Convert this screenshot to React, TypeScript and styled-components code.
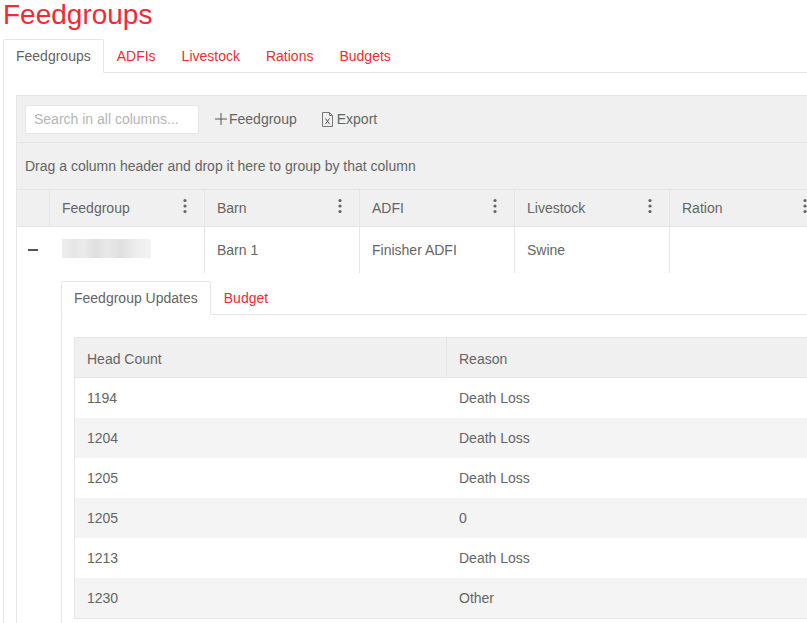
import React from "react";
import styled, { createGlobalStyle } from "styled-components";

const GlobalStyle = createGlobalStyle`
  html, body {
    margin: 0;
    padding: 0;
    height: 100%;
    overflow: hidden;
    background: #fff;
  }
  body {
    font-family: "Liberation Sans", Arial, sans-serif;
    font-size: 14px;
    color: #656565;
  }
`;

const RED = "#f02b36";
const LINE = "#e6e6e6";
const HEAD = "#f0f0f0";

const Page = styled.div`
  width: 1100px;
  padding-left: 3px;
`;

const Title = styled.h1`
  margin: 0;
  height: 39px;
  font-size: 28px;
  line-height: 29px;
  font-weight: 400;
  color: ${RED};
`;

const TabBar = styled.div`
  display: flex;
  align-items: flex-start;
  height: 34px;
  box-sizing: border-box;
  border-bottom: 1px solid ${LINE};
`;

const Tab = styled.div<{ $active?: boolean }>`
  height: ${(p) => (p.$active ? "34px" : "33px")};
  box-sizing: border-box;
  padding: 8px 12px 0;
  line-height: 16px;
  color: ${(p) => (p.$active ? "#656565" : RED)};
  background: ${(p) => (p.$active ? "#fff" : "transparent")};
  border: 1px solid ${(p) => (p.$active ? LINE : "transparent")};
  border-bottom: ${(p) => (p.$active ? "1px solid #fff" : "0")};
  border-radius: 2px 2px 0 0;
`;

const TabBody = styled.div`
  border-left: 1px solid ${LINE};
  padding: 22px 0 0 12px;
`;

const Grid = styled.div`
  border: 1px solid ${LINE};
  border-right: 0;
`;

const Toolbar = styled.div`
  display: flex;
  align-items: center;
  height: 47px;
  box-sizing: border-box;
  padding: 0 8px;
  background: ${HEAD};
  border-bottom: 1px solid ${LINE};
`;

const Search = styled.input`
  width: 174px;
  height: 29px;
  box-sizing: border-box;
  padding: 0 8px;
  border: 1px solid ${LINE};
  border-radius: 2px;
  background: #fff;
  font: inherit;
  &::placeholder {
    color: #b5b5b5;
    opacity: 1;
  }
`;

const ToolButton = styled.div<{ $offset: number; $gap: number }>`
  display: flex;
  align-items: center;
  gap: ${(p) => p.$gap}px;
  margin-left: ${(p) => p.$offset}px;
`;

const GroupHint = styled.div`
  height: 47px;
  box-sizing: border-box;
  padding: 15px 8px 0;
  line-height: 16px;
  background: ${HEAD};
  border-bottom: 1px solid ${LINE};
`;

const Row = styled.div`
  display: grid;
  grid-template-columns: 33px repeat(5, 155px);
`;

const HeadRow = styled(Row)`
  height: 37px;
  background: ${HEAD};
  border-bottom: 1px solid ${LINE};
  box-sizing: border-box;
`;

const HeadCell = styled.div`
  position: relative;
  display: flex;
  align-items: center;
  padding-left: 12px;
  border-right: 1px solid ${LINE};
`;

const MenuDots = styled.svg`
  position: absolute;
  right: 17px;
  top: 8px;
`;

const DataRow = styled(Row)`
  height: 46px;
`;

const Cell = styled.div`
  display: flex;
  align-items: center;
  padding-left: 12px;
  border-right: 1px solid ${LINE};
`;

const ExpandCell = styled.div`
  display: flex;
  align-items: center;
  padding-left: 11px;
`;

const Blur = styled.div`
  width: 89px;
  height: 19px;
  margin-bottom: 3px;
  background: linear-gradient(
    90deg,
    #ededed 0%,
    #e6e6e6 14%,
    #ebebeb 24%,
    #dfdfdf 38%,
    #e9e9e9 50%,
    #e0e0e0 66%,
    #eeeeee 84%,
    #f3f3f3 100%
  );
`;

const Detail = styled.div`
  padding: 8px 0 0 44px;
`;

const InnerBody = styled(TabBody)`
  padding-bottom: 30px;
`;

const UpdateRow = styled.div<{ $alt?: boolean }>`
  display: grid;
  grid-template-columns: 372px 1fr;
  height: 40px;
  background: ${(p) => (p.$alt ? "#f4f4f4" : "#fff")};
`;

const UpdateHead = styled(UpdateRow)`
  height: 39px;
  box-sizing: content-box;
  background: ${HEAD};
  border-bottom: 1px solid ${LINE};
`;

const UpdateCell = styled.div<{ $head?: boolean }>`
  display: flex;
  align-items: center;
  padding-left: 12px;
  padding-top: ${(p) => (p.$head ? "2px" : "0")};
  border-right: ${(p) => (p.$head ? `1px solid ${LINE}` : "0")};
`;

const UpdatesGrid = styled(Grid)`
  border-bottom: 1px solid ${LINE};
`;

const columns = ["Feedgroup", "Barn", "ADFI", "Livestock", "Ration"];

const updates = [
  ["1194", "Death Loss"],
  ["1204", "Death Loss"],
  ["1205", "Death Loss"],
  ["1205", "0"],
  ["1213", "Death Loss"],
  ["1230", "Other"],
];

const Dots = () => (
  <MenuDots width="4" height="16" viewBox="0 0 4 16">
    <circle cx="2" cy="2.5" r="1.6" fill="#656565" />
    <circle cx="2" cy="8" r="1.6" fill="#656565" />
    <circle cx="2" cy="13.5" r="1.6" fill="#656565" />
  </MenuDots>
);

const PlusIcon = () => (
  <svg width="12" height="12" viewBox="0 0 12 12" stroke="#555">
    <path d="M6 0v12M0 6h12" />
  </svg>
);

const MinusIcon = () => (
  <svg width="10" height="2" viewBox="0 0 10 2">
    <rect width="10" height="2" fill="#555" />
  </svg>
);

const ExcelFile = () => (
  <svg width="11" height="15" viewBox="0 0 11 15" fill="none" stroke="#777">
    <path d="M.5.5h7l3 3v11H.5z" />
    <path d="M7.5.5v3h3" />
    <path d="M3.5 6.5l4 5.5M7.5 6.5l-4 5.5" stroke="#555" />
  </svg>
);

export default function App() {
  return (
    <Page>
      <GlobalStyle />
      <Title>Feedgroups</Title>
      <TabBar>
        <Tab $active>Feedgroups</Tab>
        <Tab>ADFIs</Tab>
        <Tab>Livestock</Tab>
        <Tab>Rations</Tab>
        <Tab>Budgets</Tab>
      </TabBar>
      <TabBody>
        <Grid>
          <Toolbar>
            <Search placeholder="Search in all columns..." />
            <ToolButton $offset={16} $gap={2}>
              <PlusIcon />
              Feedgroup
            </ToolButton>
            <ToolButton $offset={25} $gap={4}>
              <ExcelFile />
              Export
            </ToolButton>
          </Toolbar>
          <GroupHint>Drag a column header and drop it here to group by that column</GroupHint>
          <HeadRow>
            <HeadCell />
            {columns.map((c) => (
              <HeadCell key={c}>
                {c}
                <Dots />
              </HeadCell>
            ))}
          </HeadRow>
          <DataRow>
            <ExpandCell>
              <MinusIcon />
            </ExpandCell>
            <Cell>
              <Blur />
            </Cell>
            <Cell>Barn 1</Cell>
            <Cell>Finisher ADFI</Cell>
            <Cell>Swine</Cell>
            <Cell />
          </DataRow>
          <Detail>
            <TabBar>
              <Tab $active>Feedgroup Updates</Tab>
              <Tab>Budget</Tab>
            </TabBar>
            <InnerBody>
              <UpdatesGrid>
                <UpdateHead>
                  <UpdateCell $head>Head Count</UpdateCell>
                  <UpdateCell $head>Reason</UpdateCell>
                </UpdateHead>
                {updates.map(([count, reason], i) => (
                  <UpdateRow key={i} $alt={i % 2 === 1}>
                    <UpdateCell>{count}</UpdateCell>
                    <UpdateCell>{reason}</UpdateCell>
                  </UpdateRow>
                ))}
              </UpdatesGrid>
            </InnerBody>
          </Detail>
        </Grid>
      </TabBody>
    </Page>
  );
}
